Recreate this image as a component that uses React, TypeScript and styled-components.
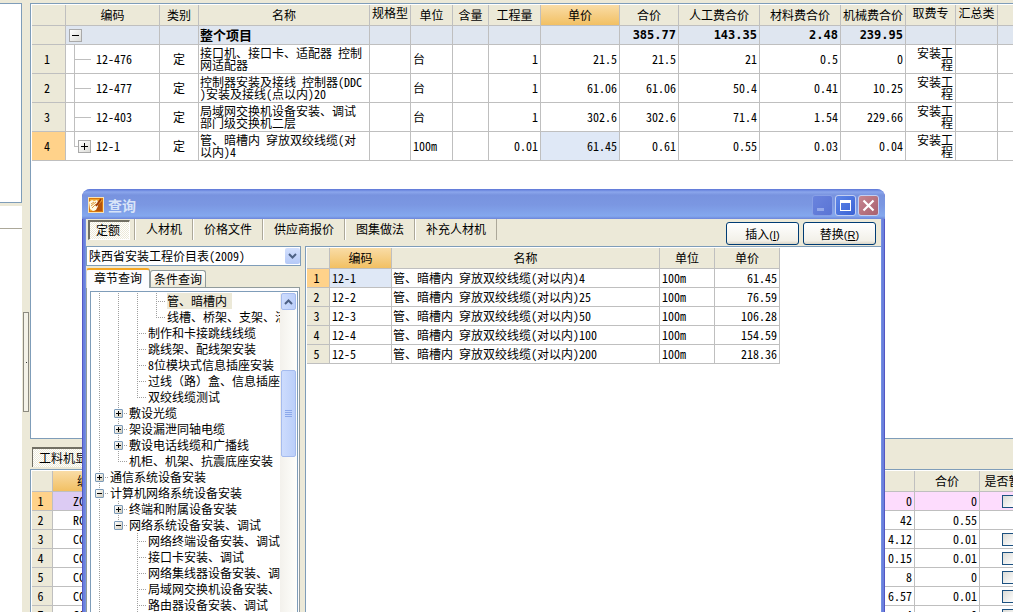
import React from "react";
import styled, { createGlobalStyle, css } from "styled-components";

const face = "#ece9d8";
const line = "#bfbfbf";
const edge = "#7f9db9";
const textFont = `"Noto Sans Mono CJK SC", "Noto Sans CJK SC", monospace`;

const GlobalStyle = createGlobalStyle`
  *, *::before, *::after { box-sizing: border-box; }
  body { margin: 0; background: ${face}; font: 12px/14px ${textFont}; color: #000; overflow: hidden; }
  button, select, input, table { font: inherit; color: inherit; margin: 0; }
`;

const Workspace = styled.div`
  position: relative;
  display: flex;
  height: 100vh;
  padding-top: 3px;
  background: ${face};
  overflow: hidden;
`;

const Sidebar = styled.aside`
  display: flex;
  flex-direction: column;
  gap: 3px;
  flex: 0 0 22px;
`;

const SideList = styled.div`
  height: 200px;
  background: #fff;
  border: solid ${edge};
  border-width: 1px 1px 1px 0;
`;

const SideDetail = styled.div`
  flex: 1;
  background: #fff;
`;

const SideHeading = styled.div`
  height: 23px;
  border-bottom: 1px solid #aca899;
`;

const Splitter = styled.div`
  flex: 0 0 8px;
  display: flex;
  justify-content: center;
  padding-top: 309px;
`;

const SplitterGrip = styled.div`
  display: flex;
  align-items: center;
  justify-content: center;
  width: 6px;
  height: 100px;
  border: 1px solid #8c8a80;
  background: #f4f2e8;
  &::before { content: ""; width: 1px; height: 1px; background: #333; }
`;

const Main = styled.main`
  flex: 1;
  min-width: 0;
  display: flex;
  flex-direction: column;
`;

const GridPane = styled.section<{ $grow?: boolean }>`
  flex: ${(p) => (p.$grow ? "1 1 0" : "0 0 auto")};
  min-height: 0;
  background: #fff;
  border: solid ${edge};
  border-width: 1px 0 1px 1px;
  padding: 1px 0 0 1px;
  overflow: hidden;
`;

const LowerSection = styled.section`
  height: 173px;
  padding-top: 8px;
  overflow: hidden;
`;

const dither = css`
  background: repeating-conic-gradient(#ffffff 0 25%, ${face} 0 50%) 0 0 / 2px 2px;
`;

const LowerTab = styled.button`
  display: block;
  width: 90px;
  height: 20px;
  && { margin: 0 0 2px 2px; }
  padding: 0 0 0 6px;
  border: solid #716f64;
  border-width: 2px 0 0 1px;
  text-align: left;
  line-height: 14px;
  ${dither}
`;

/* ---- data grids ---- */

const Grid = styled.table<{ $width?: string }>`
  table-layout: fixed;
  border-collapse: separate;
  border-spacing: 0;
  width: ${(p) => p.$width || "auto"};
`;

const HeadCell = styled.th<{ $hot?: boolean; $top?: boolean }>`
  height: 21px;
  padding: ${(p) => (p.$top ? "0 0 4px" : "0")};
  font-weight: normal;
  line-height: 14px;
  white-space: nowrap;
  overflow: hidden;
  border: solid ${line};
  border-width: 0 1px 1px 0;
  background: ${(p) => (p.$hot ? "linear-gradient(#f9dca6, #f2c063)" : face)};
`;

const Cell = styled.td<{ $align?: string; $bg?: string; $tall?: boolean; $bold?: boolean; $pad?: string }>`
  height: ${(p) => (p.$tall ? 29 : 19)}px;
  padding: ${(p) => p.$pad || "0 2px"};
  text-align: ${(p) => p.$align || "left"};
  line-height: 12px;
  white-space: nowrap;
  overflow: hidden;
  border: solid ${line};
  border-width: 0 1px 1px 0;
  background: ${(p) => p.$bg || "#fff"};
  ${(p) => p.$bold && "font-weight: bold; font-size: 13px;"}
`;

const TotalCell = styled(Cell)`
  && { font: bold 12px/12px "DejaVu Sans Mono", monospace; }
`;

const RowHead = styled.th<{ $hot?: boolean }>`
  padding: 0 3px 0 0;
  font-weight: normal;
  border: solid ${line};
  border-width: 0 1px 1px 0;
  background: ${(p) => (p.$hot ? "#ffd28a" : face)};
`;

const Toggle = styled.button`
  position: relative;
  flex: none;
  display: block;
  width: 13px;
  height: 13px;
  padding: 0;
  border: 1px solid #a9a9a9;
  background: linear-gradient(135deg, #fff, #dcdcd8);
  svg { display: block; }
`;

const CodeCell = styled.div`
  display: flex;
  align-items: center;
  height: 28px;
  gap: 5px;
`;

const Branch = styled.span<{ $last?: boolean }>`
  position: relative;
  flex: 0 0 25px;
  height: 28px;
  display: flex;
  align-items: center;
  justify-content: flex-end;
  &::before {
    content: "";
    position: absolute;
    left: 8px;
    top: 0;
    width: 1px;
    height: ${(p) => (p.$last ? "15px" : "29px")};
    background: ${line};
  }
  &::after {
    content: "";
    position: absolute;
    left: 8px;
    top: 14px;
    width: ${(p) => (p.$last ? "4px" : "17px")};
    height: 1px;
    background: ${line};
  }
`;

const Check = styled.input`
  appearance: none;
  display: block;
  width: 13px;
  height: 13px;
  && { margin: 0 auto; }
  border: 1px solid #1c5180;
  background: linear-gradient(135deg, #dcdcd7, #fff);
`;

/* ---- query window ---- */

const Dialog = styled.section`
  position: absolute;
  left: 82px;
  right: 128px;
  top: 189px;
  bottom: 0;
  display: flex;
  flex-direction: column;
  padding: 0 4px;
  border-radius: 8px 8px 0 0;
  background: linear-gradient(90deg, #5457c4 0 1px, #6a80dd 1px 3px, #7590e2 3px calc(100% - 3px), #6a80dd calc(100% - 3px) calc(100% - 1px), #5457c4 calc(100% - 1px));
  overflow: hidden;
`;

const TitleBar = styled.header`
  display: flex;
  align-items: center;
  flex: 0 0 30px;
  margin: 0 -4px;
  padding: 2px 6px 0;
  gap: 4px;
  border-radius: 8px 8px 0 0;
  background: linear-gradient(#5f76d6 0, #6a86de 1px, #8ba6ec 3px, #7893df 6px, #7b97e2 16px, #84a8ee 27px, #6d86da 30px);
`;

const Title = styled.h1`
  flex: 1;
  margin: 0;
  font: bold 14px/16px "Noto Sans CJK SC", sans-serif;
  color: #d8e4f8;
`;

const CaptionButtons = styled.div`
  display: flex;
  gap: 2px;
`;

const CaptionButton = styled.button<{ $kind: "min" | "max" | "close" }>`
  display: grid;
  place-items: center;
  width: 21px;
  height: 21px;
  padding: 0;
  border-radius: 3px;
  border: 1px solid ${(p) => (p.$kind === "min" ? "#879fe6" : "#c3cff2")};
  background: ${(p) => (p.$kind === "close" ? "linear-gradient(135deg, #c68690, #a8606f)" : p.$kind === "max" ? "linear-gradient(135deg, #5e86e8, #3a62d4)" : "linear-gradient(135deg, #6a84de, #5a74d4)")};
`;

const Client = styled.div`
  flex: 1;
  min-height: 0;
  display: flex;
  flex-direction: column;
  background: ${face};
`;

const Toolbar = styled.nav`
  display: flex;
  flex: 0 0 27px;
  padding: 0 5px 0 2px;
`;

const ToolTab = styled.button<{ $active?: boolean }>`
  height: ${(p) => (p.$active ? 20 : 21)}px;
  padding: 0 10px 2px;
  line-height: 14px;
  white-space: nowrap;
  border: solid;
  border-width: 0 1px;
  border-color: transparent #aca899 transparent #fff;
  background: none;
  ${(p) =>
    p.$active &&
    css`
      width: 42px;
      && { margin: 1px 4px 0 0; }
      border-width: 2px 1px 1px 2px;
      border-color: #716f64 #fff #fff #716f64;
      padding: 0 8px 2px 5px;
      ${dither}
    `}
`;

const Divider = styled.span`
  width: 1px;
  height: 21px;
  background: #aca899;
`;

const Actions = styled.div`
  display: flex;
  gap: 4px;
  margin-left: auto;
  padding-top: 3px;
`;

const PushButton = styled.button`
  width: 73px;
  height: 23px;
  padding: 0;
  border: 1px solid #003c74;
  border-radius: 3px;
  background: linear-gradient(#fff, #f2f0e8 85%, #d8d4c6);
  line-height: 18px;
  span { font: 11px/14px "Liberation Sans", sans-serif; }
`;

const Columns = styled.div`
  flex: 1;
  min-height: 0;
  display: flex;
  gap: 4px;
`;

const Navigator = styled.div`
  flex: 0 0 215px;
  min-width: 0;
  min-height: 0;
  display: flex;
  flex-direction: column;
`;

const Combo = styled.label`
  position: relative;
  display: block;
  flex: 0 0 20px;
  margin-bottom: 2px;
`;

const ComboSelect = styled.select`
  appearance: none;
  display: block;
  width: 100%;
  height: 20px;
  padding: 0 18px 0 2px;
  border: 1px solid ${edge};
  border-radius: 0;
  background: #fff;
`;

const ComboArrow = styled.span`
  position: absolute;
  right: 1px;
  top: 2px;
  display: grid;
  place-items: center;
  width: 15px;
  height: 16px;
  border-radius: 2px;
  background: linear-gradient(#d3e0fd, #b5c9f7);
  pointer-events: none;
`;

const PageTabs = styled.div`
  display: flex;
  align-items: flex-end;
  flex: 0 0 19px;
`;

const PageTab = styled.button<{ $active?: boolean }>`
  position: relative;
  z-index: 1;
  width: ${(p) => (p.$active ? 64 : 56)}px;
  height: ${(p) => (p.$active ? 20 : 17)}px;
  && { margin-bottom: ${(p) => (p.$active ? "-1px" : "0")}; }
  padding: ${(p) => (p.$active ? "0 0 3px" : "0")};
  line-height: 14px;
  white-space: nowrap;
  border: 1px solid #919b9c;
  border-bottom: 0;
  border-radius: 3px 3px 0 0;
  background: ${(p) => (p.$active ? "#fcfcfe" : "linear-gradient(#fff, #ece9d8)")};
  ${(p) => p.$active && "border-top: 2px solid #f5a623; border-left-color: #d8d6cc;"}
`;

const PagePanel = styled.div`
  flex: 1;
  min-height: 0;
  display: flex;
  padding: 3px 1px 0 3px;
  border: 1px solid #919b9c;
  border-bottom: 0;
  margin-right: 1px;
  background: #fcfcfe;
`;

const TreeBox = styled.div`
  flex: 1;
  min-width: 0;
  display: flex;
  background: #fff;
  border: 1px solid ${edge};
  border-bottom: 0;
  padding-top: 1px;
  overflow: hidden;
`;

const Tree = styled.ul`
  flex: 1;
  min-width: 0;
  margin: 0;
  padding: 0;
  list-style: none;
  overflow: hidden;
`;

const TreeRow = styled.li`
  display: flex;
  height: 16px;
  white-space: nowrap;
`;

const dotsV = "repeating-linear-gradient(#a0a0a0 0 1px, transparent 1px 2px)";
const dotsH = "repeating-linear-gradient(90deg, #a0a0a0 0 1px, transparent 1px 2px)";

const Guide = styled.span<{ $kind: string }>`
  position: relative;
  flex: 0 0 19px;
  height: 16px;
  &::before {
    content: "";
    position: absolute;
    left: 8px;
    top: 0;
    width: 1px;
    height: ${(p) => (p.$kind === "x" ? 0 : p.$kind === "l" || p.$kind === "m" ? 8 : 16)}px;
    background: ${dotsV};
  }
  &::after {
    content: "";
    position: absolute;
    left: 8px;
    top: 8px;
    width: ${(p) => (p.$kind === "v" || p.$kind === "x" ? 0 : 10)}px;
    height: 1px;
    background: ${dotsH};
  }
`;

const Expander = styled.button`
  position: absolute;
  z-index: 1;
  left: 4px;
  top: 4px;
  width: 9px;
  height: 9px;
  padding: 0;
  border: 1px solid #7b9ab8;
  border-radius: 1px;
  background: linear-gradient(135deg, #fff, #d2cdbc);
  svg { display: block; }
`;

const NodeLabel = styled.span<{ $selected?: boolean }>`
  padding-right: ${(p) => (p.$selected ? 5 : 0)}px;
  line-height: 16px;
  background: ${(p) => (p.$selected ? face : "none")};
`;

const ScrollBar = styled.div`
  display: flex;
  flex-direction: column;
  gap: 60px;
  flex: 0 0 17px;
  padding: 0 1px;
  background: linear-gradient(90deg, #f3f1ec, #fefefb);
`;

const ScrollPart = styled.div<{ $size: number }>`
  display: grid;
  place-items: center;
  flex: 0 0 ${(p) => p.$size}px;
  border: 1px solid #a5bbee;
  border-radius: 2px;
  background: linear-gradient(90deg, #cddcfd, #bbcffa);
`;

const ResultPane = styled.div`
  flex: 1;
  min-width: 0;
  padding: 1px 0 0 1px;
  background: #fff;
  border: solid ${edge};
  border-width: 1px 0 0 1px;
  overflow: hidden;
`;

/* ---- drawings ---- */

const Sign = ({ size, plus }: { size: number; plus?: boolean }) => {
  const mid = (size - 1) / 2;
  const pad = size > 8 ? 2 : 1;
  return (
    <svg width={size} height={size} shapeRendering="crispEdges" aria-hidden="true">
      <rect x={pad} y={mid} width={size - 2 * pad} height="1" fill="#000" />
      {plus && <rect x={mid} y={pad} width="1" height={size - 2 * pad} fill="#000" />}
    </svg>
  );
};

const AppIcon = () => (
  <svg width="16" height="16" viewBox="0 0 16 16" aria-hidden="true">
    <rect width="16" height="16" fill="#f9e3b4" />
    <rect x="1" y="1" width="14" height="14" fill="#d9780c" />
    <rect x="2" y="2" width="12" height="12" fill="#f0a830" />
    <path d="M9 9 14 4v10H7z" fill="#b5540c" />
    <path d="M1 5 4 3l2 1 3-1 1 2v4l-2 4-3 1-3-2z" fill="#fffbe6" />
    <path d="m3 7 3-2M3 9l5-4M4 11l4-4" stroke="#dc9a3c" strokeWidth="1" />
    <path d="M8 9 13 2" stroke="#a03c08" strokeWidth="2" />
  </svg>
);

const Chevron = ({ up }: { up?: boolean }) => (
  <svg width="9" height="6" viewBox="0 0 9 6" aria-hidden="true">
    <path d={up ? "M1 5 4.5 1.5 8 5" : "M1 1 4.5 4.5 8 1"} fill="none" stroke="#4d6185" strokeWidth="2" />
  </svg>
);

/* ---- data ---- */

const mainColumns: { w: number; t: string; top?: boolean; hot?: boolean }[] = [
  { w: 34, t: "" },
  { w: 94, t: "编码" },
  { w: 39, t: "类别" },
  { w: 171, t: "名称" },
  { w: 41, t: "规格型", top: true },
  { w: 42, t: "单位" },
  { w: 36, t: "含量" },
  { w: 52, t: "工程量" },
  { w: 79, t: "单价", hot: true },
  { w: 59, t: "合价" },
  { w: 81, t: "人工费合价" },
  { w: 81, t: "材料费合价" },
  { w: 65, t: "机械费合价" },
  { w: 50, t: "取费专", top: true },
  { w: 42, t: "汇总类", top: true },
  { w: 40, t: "" },
];

const totals = ["", "", "", "", "", "385.77", "143.35", "2.48", "239.95", "", "", ""];

const mainRows = [
  { code: "12-476", name: ["接口机、接口卡、适配器 控制", "网适配器"], unit: "台", n: ["1", "21.5", "21.5", "21", "0.5", "0"] },
  { code: "12-477", name: ["控制器安装及接线 控制器(DDC", ")安装及接线(点以内)20"], unit: "台", n: ["1", "61.06", "61.06", "50.4", "0.41", "10.25"] },
  { code: "12-403", name: ["局域网交换机设备安装、调试", "部门级交换机二层"], unit: "台", n: ["1", "302.6", "302.6", "71.4", "1.54", "229.66"] },
  { code: "12-1", name: ["管、暗槽内 穿放双绞线缆(对", "以内)4"], unit: "100m", n: ["0.01", "61.45", "0.61", "0.55", "0.03", "0.04"] },
];

const lowerRows = [
  { code: "ZC", price: "0", sum: "0", check: true },
  { code: "RC", price: "42", sum: "0.55", check: false },
  { code: "CC", price: "4.12", sum: "0.01", check: true },
  { code: "CC", price: "0.15", sum: "0.01", check: true },
  { code: "CC", price: "8", sum: "0", check: true },
  { code: "CC", price: "6.57", sum: "0.01", check: true },
  { code: "CC", price: "4", sum: "0", check: true },
];

const results = [
  ["12-1", "4", "61.45"],
  ["12-2", "25", "76.59"],
  ["12-3", "50", "106.28"],
  ["12-4", "100", "154.59"],
  ["12-5", "200", "218.36"],
];

/* Guides: v line, x gap, t tee, l corner, p closed node, o open node, m last open node */
const treeRows: [string, string][] = [
  ["vvvt", "管、暗槽内"],
  ["vvvl", "线槽、桥架、支架、活"],
  ["vvt", "制作和卡接跳线线缆"],
  ["vvt", "跳线架、配线架安装"],
  ["vvt", "8位模块式信息插座安装"],
  ["vvt", "过线（路）盒、信息插座"],
  ["vvl", "双绞线缆测试"],
  ["vp", "敷设光缆"],
  ["vp", "架设漏泄同轴电缆"],
  ["vp", "敷设电话线缆和广播线"],
  ["vl", "机柜、机架、抗震底座安装"],
  ["p", "通信系统设备安装"],
  ["o", "计算机网络系统设备安装"],
  ["vp", "终端和附属设备安装"],
  ["vm", "网络系统设备安装、调试"],
  ["vxt", "网络终端设备安装、调试"],
  ["vxt", "接口卡安装、调试"],
  ["vxt", "网络集线器设备安装、调"],
  ["vxt", "局域网交换机设备安装、"],
  ["vxt", "路由器设备安装、调试"],
];

const totalBg = "#dfe6f0";
const pickBg = "#dfe8f6";

const Cols = ({ widths }: { widths: number[] }) => (
  <colgroup>
    {widths.map((w, i) => (
      <col key={i} style={{ width: w }} />
    ))}
  </colgroup>
);

function MainGrid() {
  return (
    <Grid $width="1006px">
      <Cols widths={mainColumns.map((c) => c.w)} />
      <thead>
        <tr>
          {mainColumns.map((c, i) => (
            <HeadCell key={i} $hot={c.hot} $top={c.top}>{c.t}</HeadCell>
          ))}
        </tr>
      </thead>
      <tbody>
        <tr>
          <RowHead />
          <Cell $bg={totalBg} $pad="0 3px">
            <Toggle aria-label="折叠"><Sign size={11} /></Toggle>
          </Cell>
          <Cell $bg={totalBg} />
          <Cell $bg={totalBg} $bold $pad="0 1px">整个项目</Cell>
          {totals.map((t, i) => (
            <TotalCell key={i} $bg={totalBg} $align="right">{t}</TotalCell>
          ))}
        </tr>
        {mainRows.map((r, i) => {
          const last = i === 3;
          return (
            <tr key={i}>
              <RowHead $hot={last}>{i + 1}</RowHead>
              <Cell $tall $pad="0">
                <CodeCell>
                  <Branch $last={last}>
                    {last && <Toggle aria-label="展开"><Sign size={11} plus /></Toggle>}
                  </Branch>
                  {r.code}
                </CodeCell>
              </Cell>
              <Cell $tall $align="center">定</Cell>
              <Cell $tall $pad="0 1px">{r.name[0]}<br />{r.name[1]}</Cell>
              <Cell $tall />
              <Cell $tall>{r.unit}</Cell>
              <Cell $tall />
              {r.n.map((v, j) => (
                <Cell key={j} $tall $align="right" $bg={last && j === 1 ? pickBg : undefined}>{v}</Cell>
              ))}
              <Cell $tall $align="right">安装工<br />程</Cell>
              <Cell $tall />
              <Cell $tall />
            </tr>
          );
        })}
      </tbody>
    </Grid>
  );
}

function LowerGrid() {
  return (
    <Grid $width="1006px">
      <Cols widths={[21, 73, 714, 75, 65, 58]} />
      <thead>
        <tr>
          <HeadCell />
          <HeadCell $hot>编码</HeadCell>
          <HeadCell />
          <HeadCell />
          <HeadCell>合价</HeadCell>
          <HeadCell>是否暂估</HeadCell>
        </tr>
      </thead>
      <tbody>
        {lowerRows.map((r, i) => {
          const bg = i === 0 ? "#fddcfd" : "#fff";
          return (
            <tr key={i}>
              <RowHead $hot={i === 0}>{i + 1}</RowHead>
              <Cell $bg={i === 0 ? "#dccbf3" : "#fff"} $pad="0 0 0 20px">{r.code}</Cell>
              <Cell $bg={bg} />
              <Cell $bg={bg} $align="right">{r.price}</Cell>
              <Cell $bg={bg} $align="right">{r.sum}</Cell>
              <Cell $bg={bg}>{r.check && <Check type="checkbox" aria-label="是否暂估" />}</Cell>
            </tr>
          );
        })}
      </tbody>
    </Grid>
  );
}

function ResultGrid() {
  return (
    <Grid $width="473px">
      <Cols widths={[23, 62, 268, 55, 65]} />
      <thead>
        <tr>
          <HeadCell />
          <HeadCell $hot>编码</HeadCell>
          <HeadCell>名称</HeadCell>
          <HeadCell>单位</HeadCell>
          <HeadCell>单价</HeadCell>
        </tr>
      </thead>
      <tbody>
        {results.map(([code, pairs, price], i) => (
          <tr key={code}>
            <RowHead $hot={i === 0}>{i + 1}</RowHead>
            <Cell $bg={i === 0 ? pickBg : undefined}>{code}</Cell>
            <Cell $pad="0 1px">管、暗槽内 穿放双绞线缆(对以内){pairs}</Cell>
            <Cell>100m</Cell>
            <Cell $align="right">{price}</Cell>
          </tr>
        ))}
      </tbody>
    </Grid>
  );
}

function QueryWindow() {
  return (
    <Dialog role="dialog" aria-label="查询">
      <TitleBar>
        <AppIcon />
        <Title>查询</Title>
        <CaptionButtons>
          <CaptionButton $kind="min" aria-label="最小化">
            <svg width="13" height="13"><rect x="1" y="9" width="7" height="3" fill="#93a8ea" /></svg>
          </CaptionButton>
          <CaptionButton $kind="max" aria-label="最大化">
            <svg width="13" height="13" shapeRendering="crispEdges">
              <path d="M1 1h11v11H1zM2 4v7h9V4z" fill="#fff" fillRule="evenodd" />
            </svg>
          </CaptionButton>
          <CaptionButton $kind="close" aria-label="关闭">
            <svg width="13" height="13"><path d="M1.500 1.500 11.500 11.500M11.500 1.500 1.500 11.500" stroke="#fff" strokeWidth="2.200" /></svg>
          </CaptionButton>
        </CaptionButtons>
      </TitleBar>
      <Client>
        <Toolbar>
          <ToolTab $active>定额</ToolTab>
          <Divider />
          <ToolTab>人材机</ToolTab>
          <ToolTab>价格文件</ToolTab>
          <ToolTab>供应商报价</ToolTab>
          <ToolTab>图集做法</ToolTab>
          <ToolTab>补充人材机</ToolTab>
          <Actions>
            <PushButton>插入<span>(<u>I</u>)</span></PushButton>
            <PushButton>替换<span>(<u>R</u>)</span></PushButton>
          </Actions>
        </Toolbar>
        <Columns>
          <Navigator>
            <Combo>
              <ComboSelect aria-label="定额库">
                <option>陕西省安装工程价目表(2009)</option>
              </ComboSelect>
              <ComboArrow><Chevron /></ComboArrow>
            </Combo>
            <PageTabs>
              <PageTab $active>章节查询</PageTab>
              <PageTab>条件查询</PageTab>
            </PageTabs>
            <PagePanel>
              <TreeBox>
                <Tree>
                  {treeRows.map(([guides, label], i) => (
                    <TreeRow key={i}>
                      {guides.split("").map((g, j) => (
                        <Guide key={j} $kind={g}>
                          {"pom".includes(g) && (
                            <Expander aria-label={label}><Sign size={7} plus={g === "p"} /></Expander>
                          )}
                        </Guide>
                      ))}
                      <NodeLabel $selected={i === 0}>{label}</NodeLabel>
                    </TreeRow>
                  ))}
                </Tree>
                <ScrollBar>
                  <ScrollPart $size={17}><Chevron up /></ScrollPart>
                  <ScrollPart $size={87}>
                    <svg width="7" height="8" shapeRendering="crispEdges">
                      <path d="M0 0h7v1H0zM0 2h7v1H0zM0 4h7v1H0zM0 6h7v1H0z" fill="#8ca8ea" />
                    </svg>
                  </ScrollPart>
                </ScrollBar>
              </TreeBox>
            </PagePanel>
          </Navigator>
          <ResultPane>
            <ResultGrid />
          </ResultPane>
        </Columns>
      </Client>
    </Dialog>
  );
}

export default function App() {
  return (
    <>
      <GlobalStyle />
      <Workspace>
        <Sidebar>
          <SideList />
          <SideDetail><SideHeading /></SideDetail>
        </Sidebar>
        <Splitter><SplitterGrip /></Splitter>
        <Main>
          <GridPane $grow><MainGrid /></GridPane>
          <LowerSection>
            <LowerTab>工料机显示</LowerTab>
            <GridPane><LowerGrid /></GridPane>
          </LowerSection>
        </Main>
        <QueryWindow />
      </Workspace>
    </>
  );
}
